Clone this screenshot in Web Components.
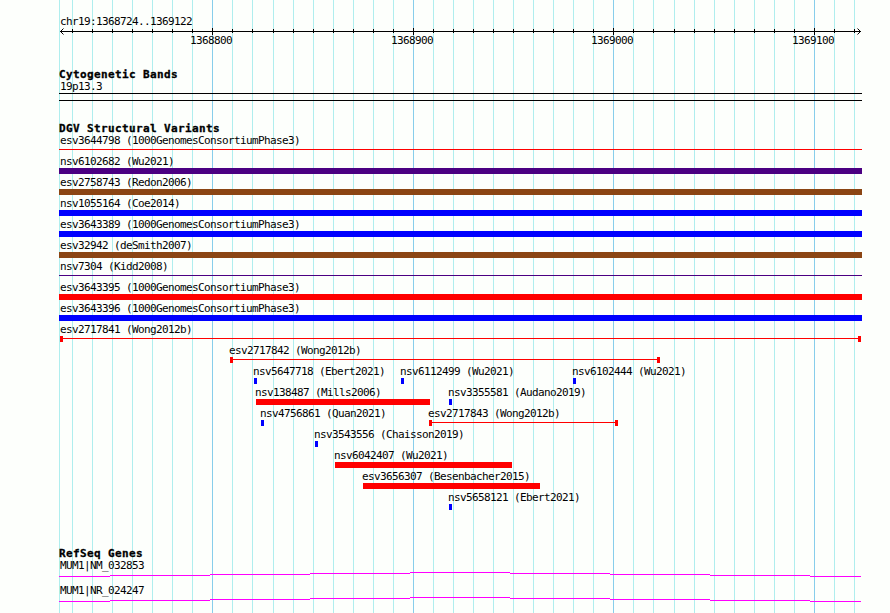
<!DOCTYPE html>
<html lang="en">
<head>
<meta charset="utf-8">
<title>chr19:1368724..1369122</title>
<style>
    body {
        margin: 0;
        background: #fdfffc;
        overflow: hidden;
    }
</style>
</head>
<body>
<genome-browser></genome-browser>

<script>
// x positions of the ruler ticks, every 10 bp; every 100 bp is a major one
const MAJOR = [212, 413, 613, 814];
const MINOR = [72, 92, 112, 132, 152, 172, 192, 232, 252, 273, 293, 313, 333, 353, 373, 393,
    433, 453, 473, 493, 513, 533, 553, 573, 593, 633, 653, 674, 694, 714, 734, 754, 774, 794, 834, 854];

const rect = (x, y, w, h, fill) => `<rect x="${x}" y="${y}" width="${w}" height="${h}" fill="${fill}"/>`;

class GridLines extends HTMLElement {
    constructor() {
        super();
        this.attachShadow({ mode: 'open' });
    }

    connectedCallback() {
        this.shadowRoot.innerHTML = `
            <style>
                :host { display: block; }
                svg { display: block; }
            </style>
            <svg width="890" height="613" shape-rendering="crispEdges">
                ${[59, ...MINOR].map(x => rect(x, 0, 1, 613, '#afeeee')).join('')}
                ${MAJOR.map(x => rect(x, 0, 1, 613, '#87ceeb')).join('')}
            </svg>
        `;
    }
}

class ScaleRuler extends HTMLElement {
    constructor() {
        super();
        this.attachShadow({ mode: 'open' });
    }

    connectedCallback() {
        const labels = ['1368800', '1368900', '1369000', '1369100'];
        this.shadowRoot.innerHTML = `
            <style>
                :host { display: block; height: 52px; padding-top: 13px; box-sizing: border-box; }
                .region { height: 15px; line-height: 18px; margin-left: 60px; }
                svg { display: block; }
                .labels { display: grid; margin-top: -3px; line-height: 18px; }
                .labels span { grid-area: 1 / 1; }
            </style>
            <div class="region"><slot></slot></div>
            <svg width="890" height="7" shape-rendering="crispEdges">
                ${rect(60, 3, 801, 1, '#000')}
                ${MINOR.map(x => rect(x, 1, 1, 4, '#000')).join('')}
                ${MAJOR.map(x => rect(x, 0, 1, 7, '#000')).join('')}
                <path d="M63.5 0.5L60.5 3.5L63.5 6.5M857.5 0.5L860.5 3.5L857.5 6.5" fill="none" stroke="#000" shape-rendering="auto"/>
            </svg>
            <div class="labels">
                ${labels.map((t, i) => `<span style="margin-left:${MAJOR[i] - 22}px">${t}</span>`).join('')}
            </div>
        `;
    }
}

class BrowserTrack extends HTMLElement {
    constructor() {
        super();
        this.attachShadow({ mode: 'open' });
    }

    connectedCallback() {
        this.shadowRoot.innerHTML = `
            <style>
                :host { display: block; }
                h2 {
                    margin: 0 0 0 59px;
                    height: 12px;
                    font-size: 11px;
                    font-weight: bold;
                    line-height: 18px;
                    letter-spacing: 0.378px;
                    -webkit-text-stroke: 0.3px #000;
                }
            </style>
            <h2>${this.getAttribute('name')}</h2>
            <slot></slot>
        `;
    }
}

class TrackRow extends HTMLElement {
    constructor() {
        super();
        this.attachShadow({ mode: 'open' });
    }

    connectedCallback() {
        this.shadowRoot.innerHTML = `
            <style>
                :host { display: grid; height: 21px; }
                ::slotted(*) { grid-area: 1 / 1; }
            </style>
            <slot></slot>
        `;
    }
}

class TrackFeature extends HTMLElement {
    constructor() {
        super();
        this.attachShadow({ mode: 'open' });
    }

    // glyph: bar, line, range (line with end caps), band or gene
    drawGlyph(glyph, w, color) {
        switch (glyph) {
            case 'line':
                return rect(0, 2, w, 1, color);
            case 'range':
                return rect(0, 2, w, 1, color) + rect(0, 0, 3, 6, color) + rect(w - 3, 0, 3, 6, color);
            case 'band':
                return rect(0, 0, w, 1, color) + rect(0, 7, w, 1, color);
            case 'gene': {
                const stops = [0, 51, 151, 251, 351, 451, 551, 651, 751, w];
                const levels = [4, 3, 2, 1, 0, 1, 2, 3, 4];
                return levels.map((y, i) => rect(stops[i], y, stops[i + 1] - stops[i], 1, color)).join('');
            }
            default:
                return rect(0, 0, w, 6, color);
        }
    }

    connectedCallback() {
        const start = Number(this.getAttribute('start'));
        const width = this.getAttribute('end') - start;
        const color = this.getAttribute('color');
        const glyph = this.getAttribute('glyph');
        const shift = this.getAttribute('shift') || 0;
        this.shadowRoot.innerHTML = `
            <style>
                :host { display: block; margin-left: ${start}px; width: ${width}px; }
                .label {
                    height: 15px;
                    line-height: 18px;
                    white-space: nowrap;
                    margin-left: ${shift}px;
                }
                svg { display: block; }
            </style>
            <div class="label"><slot></slot></div>
            <svg width="${width}" height="8" shape-rendering="crispEdges">${this.drawGlyph(glyph, width, color)}</svg>
        `;
    }
}

const RED = '#ff0000', BLUE = '#0000ff', BROWN = '#8b4513', INDIGO = '#4b0082';

// one array per row: label, start, end, glyph, colour, label shift
const VARIANTS = [
    [['esv3644798 (1000GenomesConsortiumPhase3)', 59, 862, 'line', RED, 1]],
    [['nsv6102682 (Wu2021)', 59, 862, 'bar', INDIGO, 1]],
    [['esv2758743 (Redon2006)', 59, 862, 'bar', BROWN, 1]],
    [['nsv1055164 (Coe2014)', 59, 862, 'bar', BLUE, 1]],
    [['esv3643389 (1000GenomesConsortiumPhase3)', 59, 862, 'bar', BLUE, 1]],
    [['esv32942 (deSmith2007)', 59, 862, 'bar', BROWN, 1]],
    [['nsv7304 (Kidd2008)', 59, 862, 'line', INDIGO, 1]],
    [['esv3643395 (1000GenomesConsortiumPhase3)', 59, 862, 'bar', RED, 1]],
    [['esv3643396 (1000GenomesConsortiumPhase3)', 59, 862, 'bar', BLUE, 1]],
    [['esv2717841 (Wong2012b)', 60, 861, 'range', RED, 0]],
    [['esv2717842 (Wong2012b)', 230, 660, 'range', RED, -1]],
    [
        ['nsv5647718 (Ebert2021)', 254, 257, 'bar', BLUE, -1],
        ['nsv6112499 (Wu2021)', 401, 404, 'bar', BLUE, -1],
        ['nsv6102444 (Wu2021)', 573, 576, 'bar', BLUE, -1]
    ],
    [
        ['nsv138487 (Mills2006)', 256, 430, 'bar', RED, -1],
        ['nsv3355581 (Audano2019)', 449, 452, 'bar', BLUE, -1]
    ],
    [
        ['nsv4756861 (Quan2021)', 261, 264, 'bar', BLUE, -1],
        ['esv2717843 (Wong2012b)', 429, 618, 'range', RED, -1]
    ],
    [['nsv3543556 (Chaisson2019)', 315, 318, 'bar', BLUE, -1]],
    [['nsv6042407 (Wu2021)', 335, 512, 'bar', RED, -1]],
    [['esv3656307 (Besenbacher2015)', 363, 540, 'bar', RED, -1]],
    [['nsv5658121 (Ebert2021)', 449, 452, 'bar', BLUE, -1]]
];

const feature = ([label, start, end, glyph, color, shift]) =>
    `<track-feature start="${start}" end="${end}" glyph="${glyph}" color="${color}" shift="${shift}">${label}</track-feature>`;

class GenomeBrowser extends HTMLElement {
    constructor() {
        super();
        this.attachShadow({ mode: 'open' });
    }

    connectedCallback() {
        this.shadowRoot.innerHTML = `
            <style>
                :host {
                    display: grid;
                    width: 890px;
                    height: 613px;
                    overflow: hidden;
                    color: #000;
                    font-family: "DejaVu Sans Mono", monospace;
                    font-size: 11px;
                    letter-spacing: -0.622px;
                }
                grid-lines, main { grid-area: 1 / 1; }
                .cytobands { margin-top: 14px; height: 54px; }
                .variants { height: 425px; }
                .genes track-row { height: 25px; }
            </style>
            <grid-lines></grid-lines>
            <main>
                <scale-ruler>chr19:1368724..1369122</scale-ruler>
                <browser-track class="cytobands" name="Cytogenetic Bands">
                    <track-row>${feature(['19p13.3', 59, 862, 'band', '#000', 1])}</track-row>
                </browser-track>
                <browser-track class="variants" name="DGV Structural Variants">
                    ${VARIANTS.map(row => `<track-row>${row.map(feature).join('')}</track-row>`).join('')}
                </browser-track>
                <browser-track class="genes" name="RefSeq Genes">
                    <track-row>${feature(['MUM1|NM_032853', 59, 861, 'gene', '#ff00ff', 1])}</track-row>
                    <track-row>${feature(['MUM1|NR_024247', 59, 861, 'gene', '#ff00ff', 1])}</track-row>
                </browser-track>
            </main>
        `;
    }
}

customElements.define('grid-lines', GridLines);
customElements.define('scale-ruler', ScaleRuler);
customElements.define('browser-track', BrowserTrack);
customElements.define('track-row', TrackRow);
customElements.define('track-feature', TrackFeature);
customElements.define('genome-browser', GenomeBrowser);
</script>
</body>
</html>
